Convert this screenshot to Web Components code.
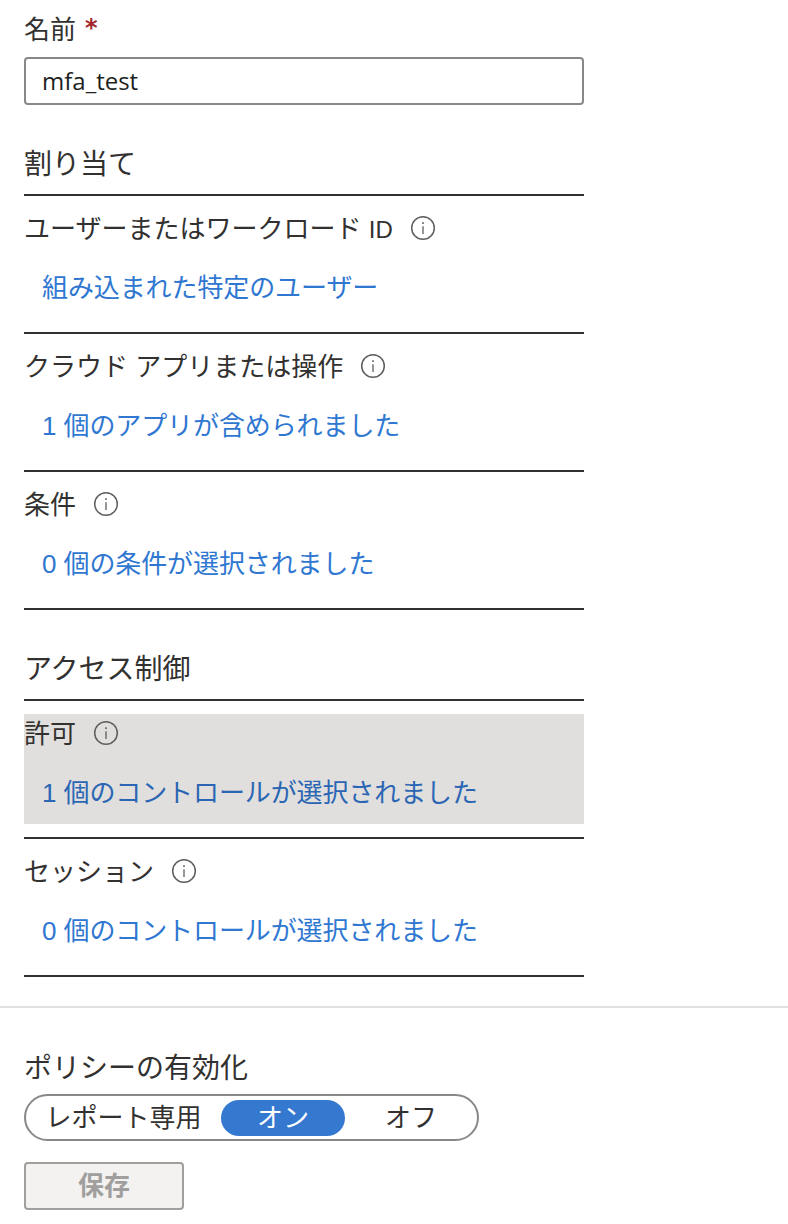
<!DOCTYPE html>
<html lang="ja">
<head>
<meta charset="utf-8">
<title>mfa_test</title>
<style>
  html, body { margin: 0; padding: 0; background: #fff; }
  body {
    font-family: "Liberation Sans", "Noto Sans CJK JP", sans-serif;
    font-size: 26px;
    color: #323130;
  }
</style>
</head>
<body>
<template id="policy-form-tpl">
  <style>
    :host { display: block; width: 788px; height: 1224px; overflow: hidden; }
    .main { padding: 0 204px 0 24px; }
    .foot { border-top: 2px solid #e1e1e1; margin-top: 29px; padding: 43px 0 0 24px; }
  </style>
  <div class="main"><slot></slot></div>
  <div class="foot"><slot name="foot"></slot></div>
</template>

<template id="name-field-tpl">
  <style>
    :host { display: block; padding-top: 13px; }
    .lbl { display: flex; height: 34px; line-height: 34px; }
    .req { color: #a4262c; margin-left: 9px; font-family: "DejaVu Sans", sans-serif; font-weight: 700; font-size: 24px; line-height: 30px; }
    .box {
      box-sizing: border-box; height: 48px; margin-top: 10px;
      border: 2px solid #8a8886; border-radius: 4px;
      padding: 0 16px; line-height: 44px; color: #201f1e;
      font-family: "Open Sans", sans-serif; font-size: 24px;
    }
  </style>
  <div class="lbl"><slot name="label"></slot><span class="req">*</span></div>
  <div class="box"><slot></slot></div>
</template>

<template id="section-head-tpl">
  <style>
    :host { display: block; }
    div { height: 36px; line-height: 40px; font-size: 28px; border-bottom: 2px solid #323130; padding-bottom: 13px; }
  </style>
  <div><slot></slot></div>
</template>

<template id="info-icon-tpl">
  <style>
    :host { display: inline-flex; margin-left: 17px; }
    svg { width: 26px; height: 26px; display: block; }
  </style>
  <svg viewBox="0 0 26 26" fill="none" stroke="#605e5c" stroke-width="1.5">
    <circle cx="13" cy="13" r="11.3"/>
    <path d="M13 11.2V19" stroke-width="1.3"/>
    <path d="M13 7.2v1.7" stroke-width="1.6"/>
  </svg>
</template>

<template id="policy-row-tpl">
  <style>
    :host { display: block; padding: 13px 0; border-bottom: 2px solid #323130; }
    .in { height: 110px; }
    :host([active]) .in { background: #e1dfdd; }
    .t { display: flex; align-items: center; height: 38px; }
    ::slotted([slot=title]) { padding-bottom: 4px; }
    .v { margin-top: 22px; padding-left: 18px; height: 38px; line-height: 38px; color: #2f77d1; letter-spacing: -0.1px; }
    :host([active]) .v { color: #2a66b4; }
  </style>
  <div class="in">
    <div class="t"><slot name="title"></slot><info-icon></info-icon></div>
    <div class="v"><slot></slot></div>
  </div>
</template>

<template id="mode-toggle-tpl">
  <style>
    :host { display: block; width: 455px; margin-top: 7px; }
    .track {
      box-sizing: border-box; height: 47px; border: 2px solid #8a8886; border-radius: 24px;
      display: grid; grid-template-columns: 195px 124px 1fr; align-items: center;
    }
    ::slotted(*) { height: 36px; line-height: 36px; text-align: center; }
    ::slotted([on]) { background: #3578cf; color: #fff; border-radius: 18px; }
  </style>
  <div class="track"><slot></slot></div>
</template>

<template id="save-button-tpl">
  <style>
    :host { display: block; margin-top: 21px; }
    div {
      box-sizing: border-box; width: 160px; height: 48px;
      background: #f3f2f1; border: 2px solid #a19f9d; border-radius: 4px;
      color: #a19f9d; font-weight: 700; text-align: center; line-height: 44px;
    }
  </style>
  <div><slot></slot></div>
</template>

<policy-form>
  <name-field><span slot="label">名前</span>mfa_test</name-field>
  <section-head style="margin-top:40px">割り当て</section-head>
  <policy-row><span slot="title">ユーザーまたはワークロード <span style="font-size:24px">ID</span></span>組み込まれた特定のユーザー</policy-row>
  <policy-row><span slot="title">クラウド アプリまたは操作</span>1 個のアプリが含められました</policy-row>
  <policy-row><span slot="title">条件</span>0 個の条件が選択されました</policy-row>
  <section-head style="margin-top:40px">アクセス制御</section-head>
  <policy-row active><span slot="title">許可</span>1 個のコントロールが選択されました</policy-row>
  <policy-row><span slot="title">セッション</span>0 個のコントロールが選択されました</policy-row>
  <div slot="foot" style="height:36px;line-height:36px;font-size:28px">ポリシーの有効化</div>
  <mode-toggle slot="foot"><div>レポート専用</div><div on>オン</div><div>オフ</div></mode-toggle>
  <save-button slot="foot">保存</save-button>
</policy-form>

<script>
  // every element is just a template clone, so one small helper covers them all
  function define(tag, tplId) {
    customElements.define(tag, class extends HTMLElement {
      constructor() {
        super();
        const tpl = document.getElementById(tplId);
        this.attachShadow({ mode: 'open' }).appendChild(tpl.content.cloneNode(true));
      }
    });
  }
  define('info-icon', 'info-icon-tpl');
  define('name-field', 'name-field-tpl');
  define('section-head', 'section-head-tpl');
  define('policy-row', 'policy-row-tpl');
  define('mode-toggle', 'mode-toggle-tpl');
  define('save-button', 'save-button-tpl');
  define('policy-form', 'policy-form-tpl');
</script>
</body>
</html>
